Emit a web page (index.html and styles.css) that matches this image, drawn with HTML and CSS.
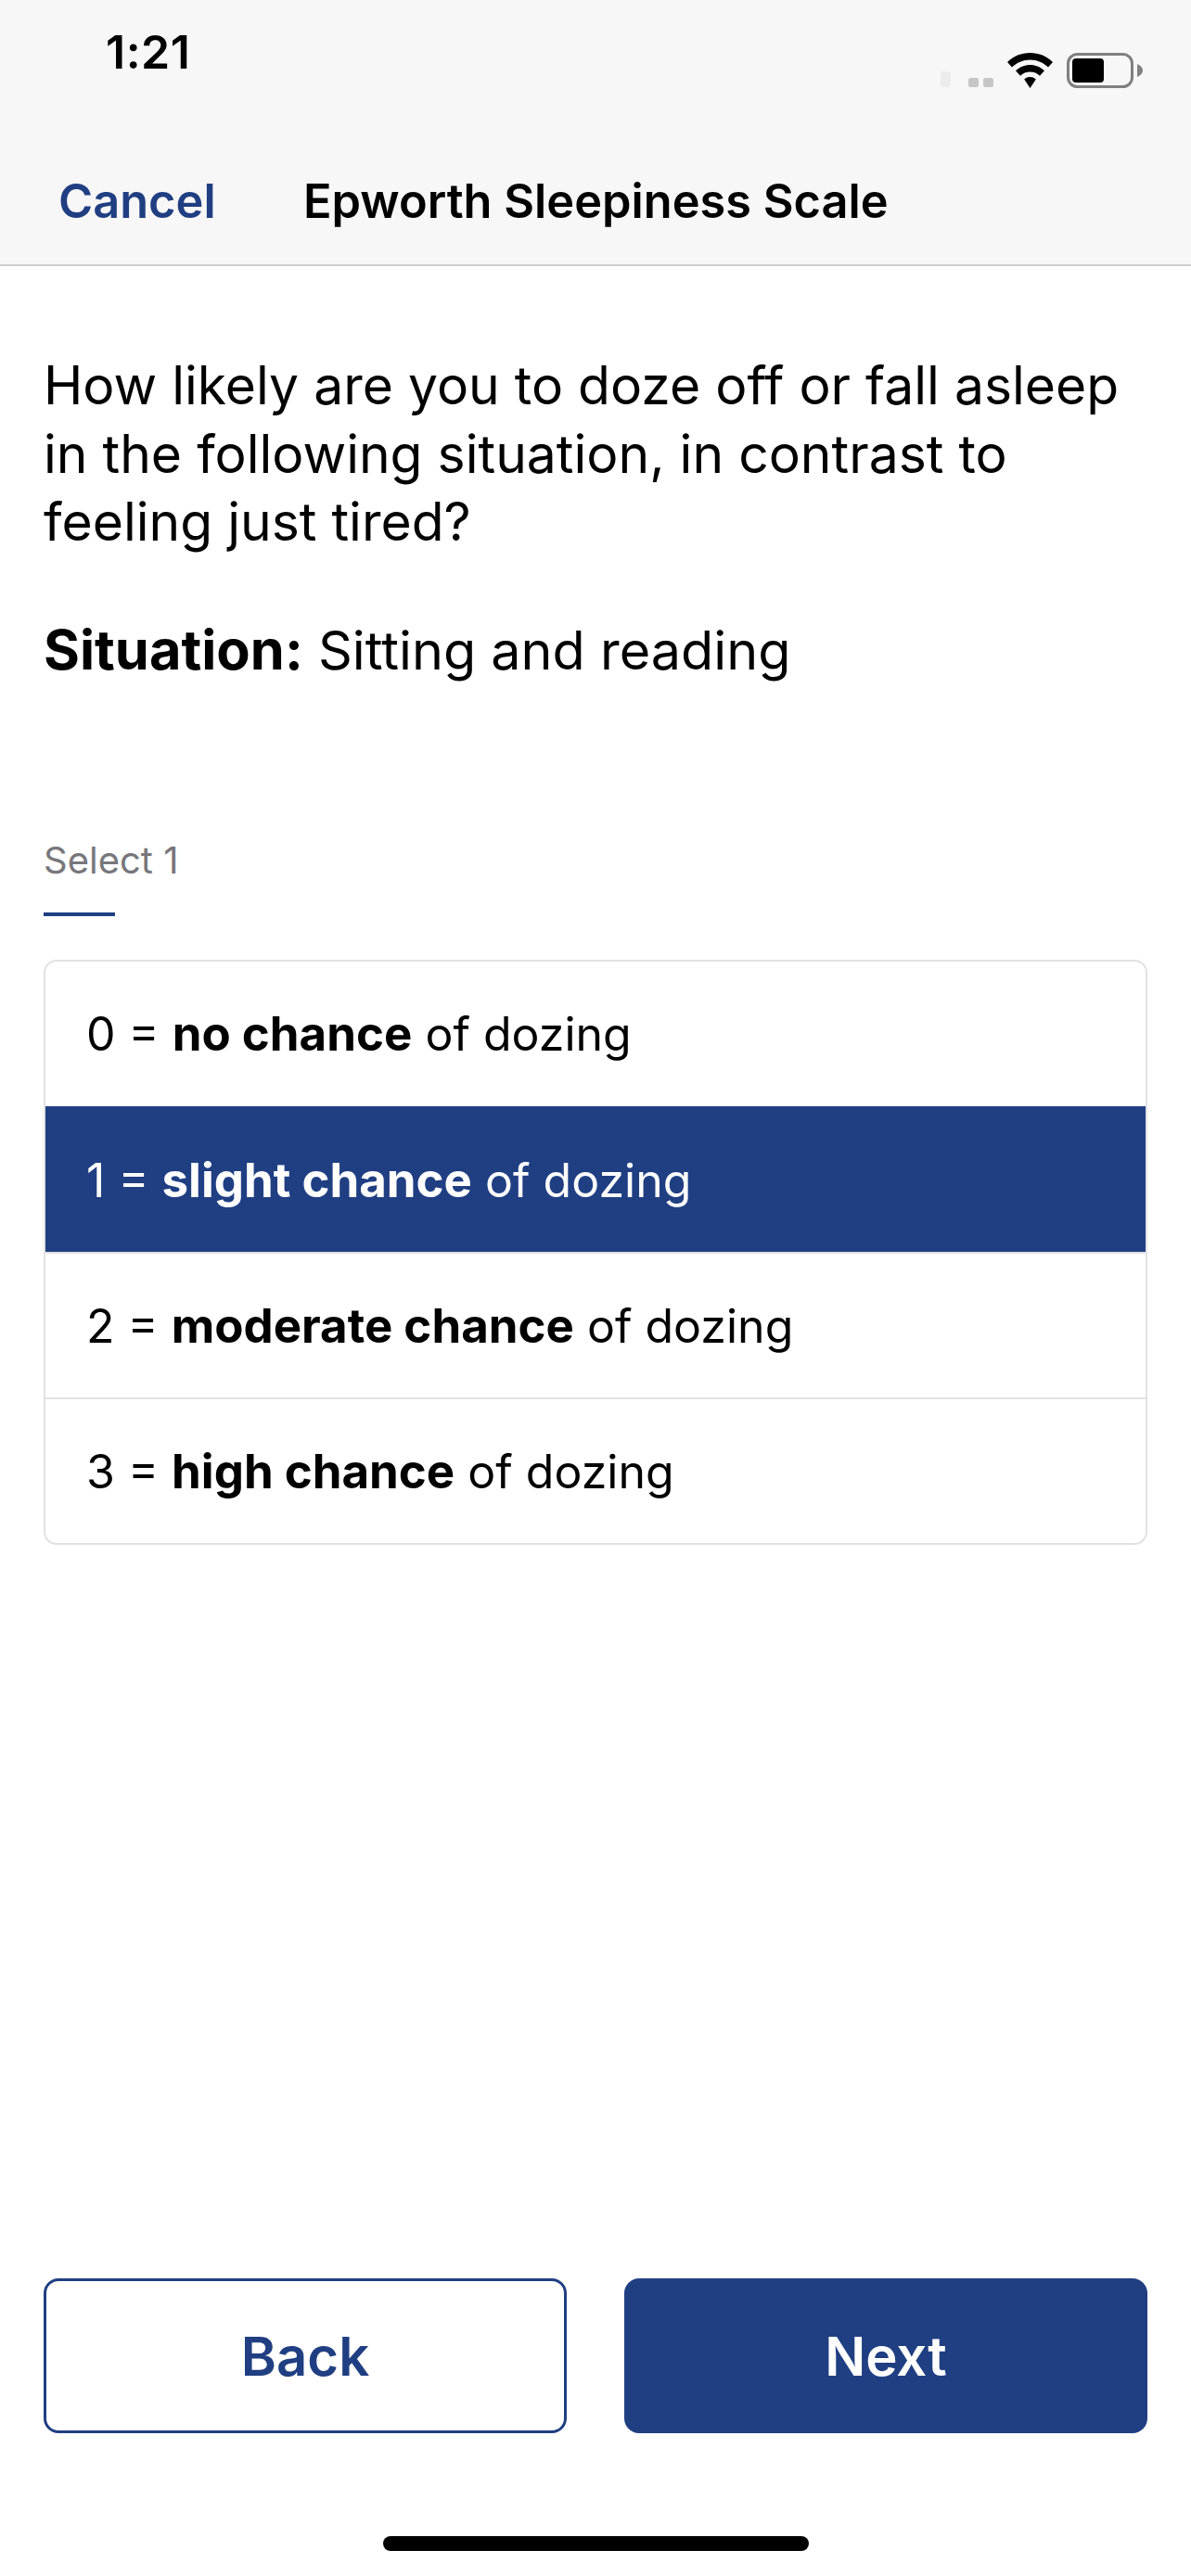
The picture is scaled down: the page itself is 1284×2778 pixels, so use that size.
FILE: index.html
```
<!DOCTYPE html>
<html lang="en">
<head>
<meta charset="utf-8">
<title>Epworth Sleepiness Scale</title>
<link rel="stylesheet" href="styles.css">
</head>
<body>
<div class="screen">
  <header class="top">
    <div class="status">
      <span class="time">1:21</span>
      <div class="status-icons">
        <svg class="signal" viewBox="0 0 57 17" aria-hidden="true"><rect x="0" y="0" width="11" height="17" rx="3" fill="#ececec"/><rect x="30" y="7" width="11" height="10" rx="2.500" fill="#c6c6c6"/><rect x="46" y="7" width="11" height="10" rx="2.500" fill="#c6c6c6"/></svg>
        <svg class="wifi" viewBox="0 0 49 38" aria-hidden="true"><path d="M24.500 0C15 0 6.500 3.500 0 10L5 15.500C10 10.500 17 7.500 24.500 7.500C32 7.500 39 10.500 44 15.500L49 10C42.500 3.500 34 0 24.500 0Z M24.500 13C18.500 13 13 15.300 9 19.300L14 24.800C16.700 22 20.400 20.500 24.500 20.500C28.600 20.500 32.300 22 35 24.800L40 19.300C36 15.300 30.500 13 24.500 13Z M24.500 26C22 26 20 26.800 18.200 28.500L24.500 38L30.800 28.500C29 26.800 27 26 24.500 26Z" fill="#000"/></svg>
        <svg class="battery" viewBox="0 0 82 38" aria-hidden="true"><rect x="1.500" y="1.500" width="69" height="35" rx="10" fill="none" stroke="#808080" stroke-width="3"/><rect x="6" y="6" width="34" height="26" rx="4" fill="#000"/><path d="M76 12C80 14 82 16 82 19C82 22 80 24 76 26Z" fill="#808080"/></svg>
      </div>
    </div>
    <nav class="nav">
      <span class="cancel">Cancel</span>
      <span class="nav-title">Epworth Sleepiness Scale</span>
    </nav>
  </header>
  <main class="content">
    <p class="question">How likely are you to doze off or fall asleep in the following situation, in contrast to feeling just tired?</p>
    <p class="situation"><b>Situation:</b> Sitting and reading</p>
    <p class="hint">Select 1</p>
    <div class="rule"></div>
    <ul class="options">
      <li class="option"><span>0 = <b>no chance</b> of dozing</span></li>
      <li class="option selected"><span>1 = <b>slight chance</b> of dozing</span></li>
      <li class="option"><span>2 = <b>moderate chance</b> of dozing</span></li>
      <li class="option"><span>3 = <b>high chance</b> of dozing</span></li>
    </ul>
  </main>
  <footer class="actions">
    <button class="btn back">Back</button>
    <button class="btn next">Next</button>
  </footer>
  <div class="home-wrap"><div class="home"></div></div>
</div>
</body>
</html>
```
FILE: styles.css
```
* { box-sizing: border-box; }
html, body { margin: 0; padding: 0; background: #fff; }
body { font-family: Inter, "Liberation Sans", sans-serif; color: #000; }
.screen { width: 1284px; height: 2778px; display: flex; flex-direction: column; }
.top { height: 287px; background: #f7f7f7; border-bottom: 2px solid #cfcfd1; display: flex; flex-direction: column; }
.status { height: 170px; display: flex; justify-content: space-between; padding: 30px 52px 0 114px; }
.time { font-size: 50px; font-weight: 600; line-height: 52px; letter-spacing: 0.5px; }
.status-icons { display: flex; align-items: flex-start; height: 38px; margin-top: 27px; gap: 15px; }
.signal { width: 57px; height: 17px; margin-top: 20px; }
.wifi { width: 49px; height: 38px; }
.battery { width: 82px; height: 38px; }
.nav { display: flex; align-items: center; height: 92px; padding: 0 63px; font-size: 50.500px; font-weight: 600; }
.cancel { color: #203f82; width: 264px; }
.content { flex: 1; padding: 0 47px; }
.question { margin: 92px 0 0; font-size: 57px; line-height: 73.500px; }
.situation { margin: 64px 0 0; font-size: 57.500px; line-height: 73px; }
.situation b { font-size: 59.500px; }
.hint { margin: 168px 0 0; font-size: 40px; line-height: 44px; color: #77777b; }
.rule { width: 77px; height: 4px; background: #203f82; margin-top: 34px; }
.options { list-style: none; margin: 47px 0 0; padding: 0; border: 2px solid #e2e2e2; border-radius: 14px; overflow: hidden; }
.option { height: 157px; display: flex; align-items: center; padding: 0 44px; font-size: 50px; border-top: 2px solid #e2e2e2; }
.option:first-child { border-top: 0; height: 156px; }
.option b { font-size: 51px; }
.selected { background: #203f82; color: #fff; border-top-color: #203f82; }
.actions { display: flex; gap: 62px; padding: 0 47px; }
.btn { flex: 1; height: 167px; border-radius: 16px; font: 600 58px Inter, "Liberation Sans", sans-serif; }
.back { background: #fff; color: #203f82; border: 3px solid #203f82; }
.next { background: #203f82; color: #fff; border: 3px solid #203f82; }
.home-wrap { height: 154px; padding-top: 111px; display: flex; justify-content: center; align-items: flex-start; }
.home { width: 459px; height: 16px; border-radius: 8px; background: #000; }
```
